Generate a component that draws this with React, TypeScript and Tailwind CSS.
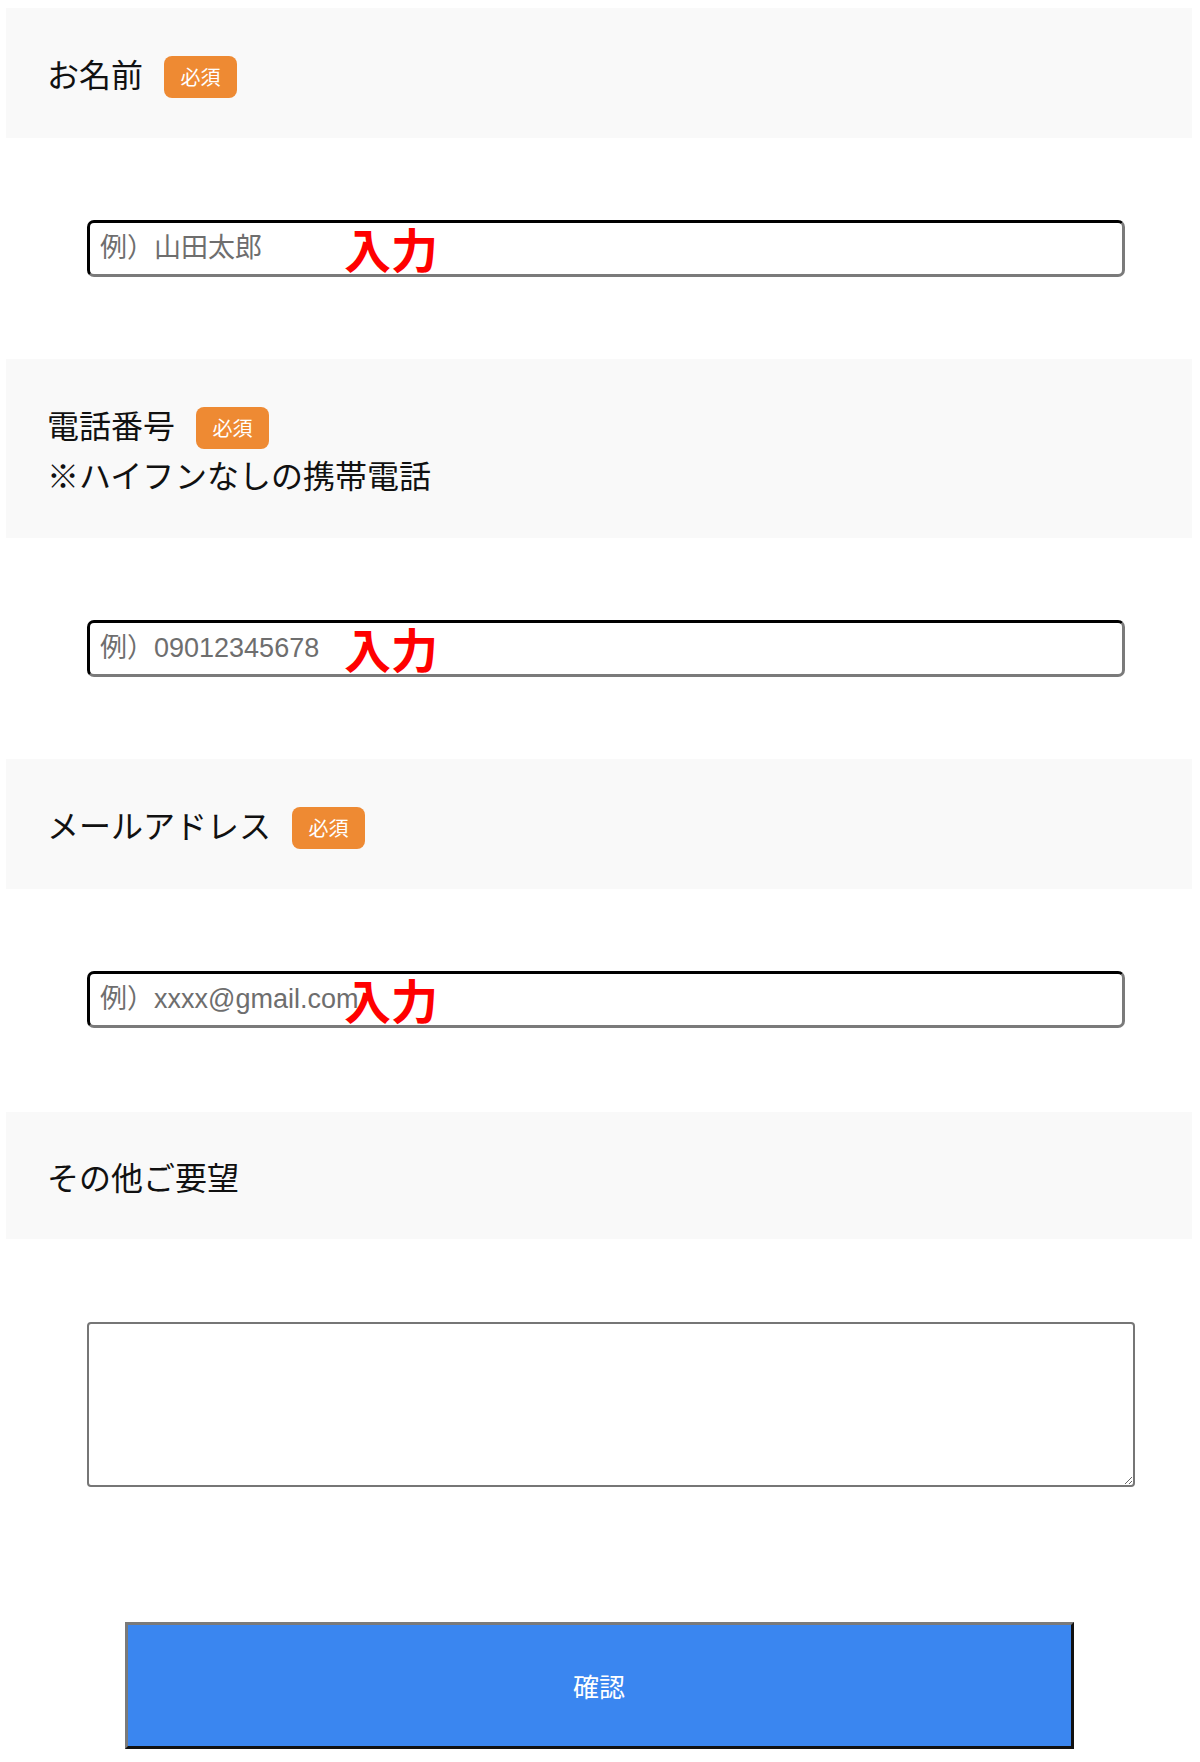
import React from "react";

const Badge: React.FC = () => (
  <span className="ml-[21px] mt-[8px] inline-flex h-[42px] w-[73px] items-center justify-center rounded-lg bg-[#ee8a33] text-[20px] text-white">
    必須
  </span>
);

const SectionHead: React.FC<{ label: string; note?: string; required?: boolean; h: string }> = ({
  label,
  note,
  required,
  h,
}) => (
  <div className={`flex items-center bg-[#f9f9f9] pl-[41px] ${h}`}>
    <div className="flex flex-col">
      <div className="flex items-center text-[32px] leading-[42px] text-[#111]">
        <span>{label}</span>
        {required && <Badge />}
      </div>
      {note && <p className="text-[32px] leading-[50px] text-[#111]">{note}</p>}
    </div>
  </div>
);

const TextField: React.FC<{ placeholder: string; type?: string }> = ({ placeholder, type = "text" }) => (
  <div className="relative ml-[81px] w-[1038px]">
    <input
      type={type}
      placeholder={placeholder}
      className="h-[57px] w-full rounded-[7px] border-[3px] border-t-black border-l-black border-r-[#7a7a7a] border-b-[#7a7a7a] bg-white px-[10px] text-[27px] outline-none placeholder:text-[#6e6e6e] [font-family:'Liberation_Sans','Noto_Sans_CJK_JP',sans-serif]"
    />
    <span className="pointer-events-none absolute left-[257px] top-[4px] text-[47px] font-bold leading-none text-[#ff0000]">
      入力
    </span>
  </div>
);

export default function App() {
  return (
    <main className="min-h-[1762px] w-full bg-white pt-2 pl-[6px] pr-[8px] [font-family:'Noto_Sans_CJK_JP','Noto_Sans',sans-serif]">
      <SectionHead label="お名前" required h="h-[130px]" />
      <div className="py-[82px]">
        <TextField placeholder="例）山田太郎" />
      </div>

      <SectionHead label="電話番号" note="※ハイフンなしの携帯電話" required h="h-[179px]" />
      <div className="py-[82px]">
        <TextField placeholder="例）09012345678" type="tel" />
      </div>

      <SectionHead label="メールアドレス" required h="h-[130px]" />
      <div className="pt-[82px] pb-[84px]">
        <TextField placeholder="例）xxxx@gmail.com" type="email" />
      </div>

      <SectionHead label="その他ご要望" h="h-[127px]" />
      <div className="pt-[83px]">
        <textarea className="ml-[81px] block h-[165px] w-[1048px] rounded-[4px] border-2 border-[#767676] bg-white p-2 text-[20px] outline-none" />
      </div>

      <div className="flex justify-center pt-[135px]">
        <button
          type="button"
          className="h-[127px] w-[949px] border-[3px] border-t-[#7a7a7a] border-l-[#7a7a7a] border-r-[#111] border-b-[#111] bg-[#3a86f0] text-[26px] text-white"
        >
          確認
        </button>
      </div>
    </main>
  );
}
